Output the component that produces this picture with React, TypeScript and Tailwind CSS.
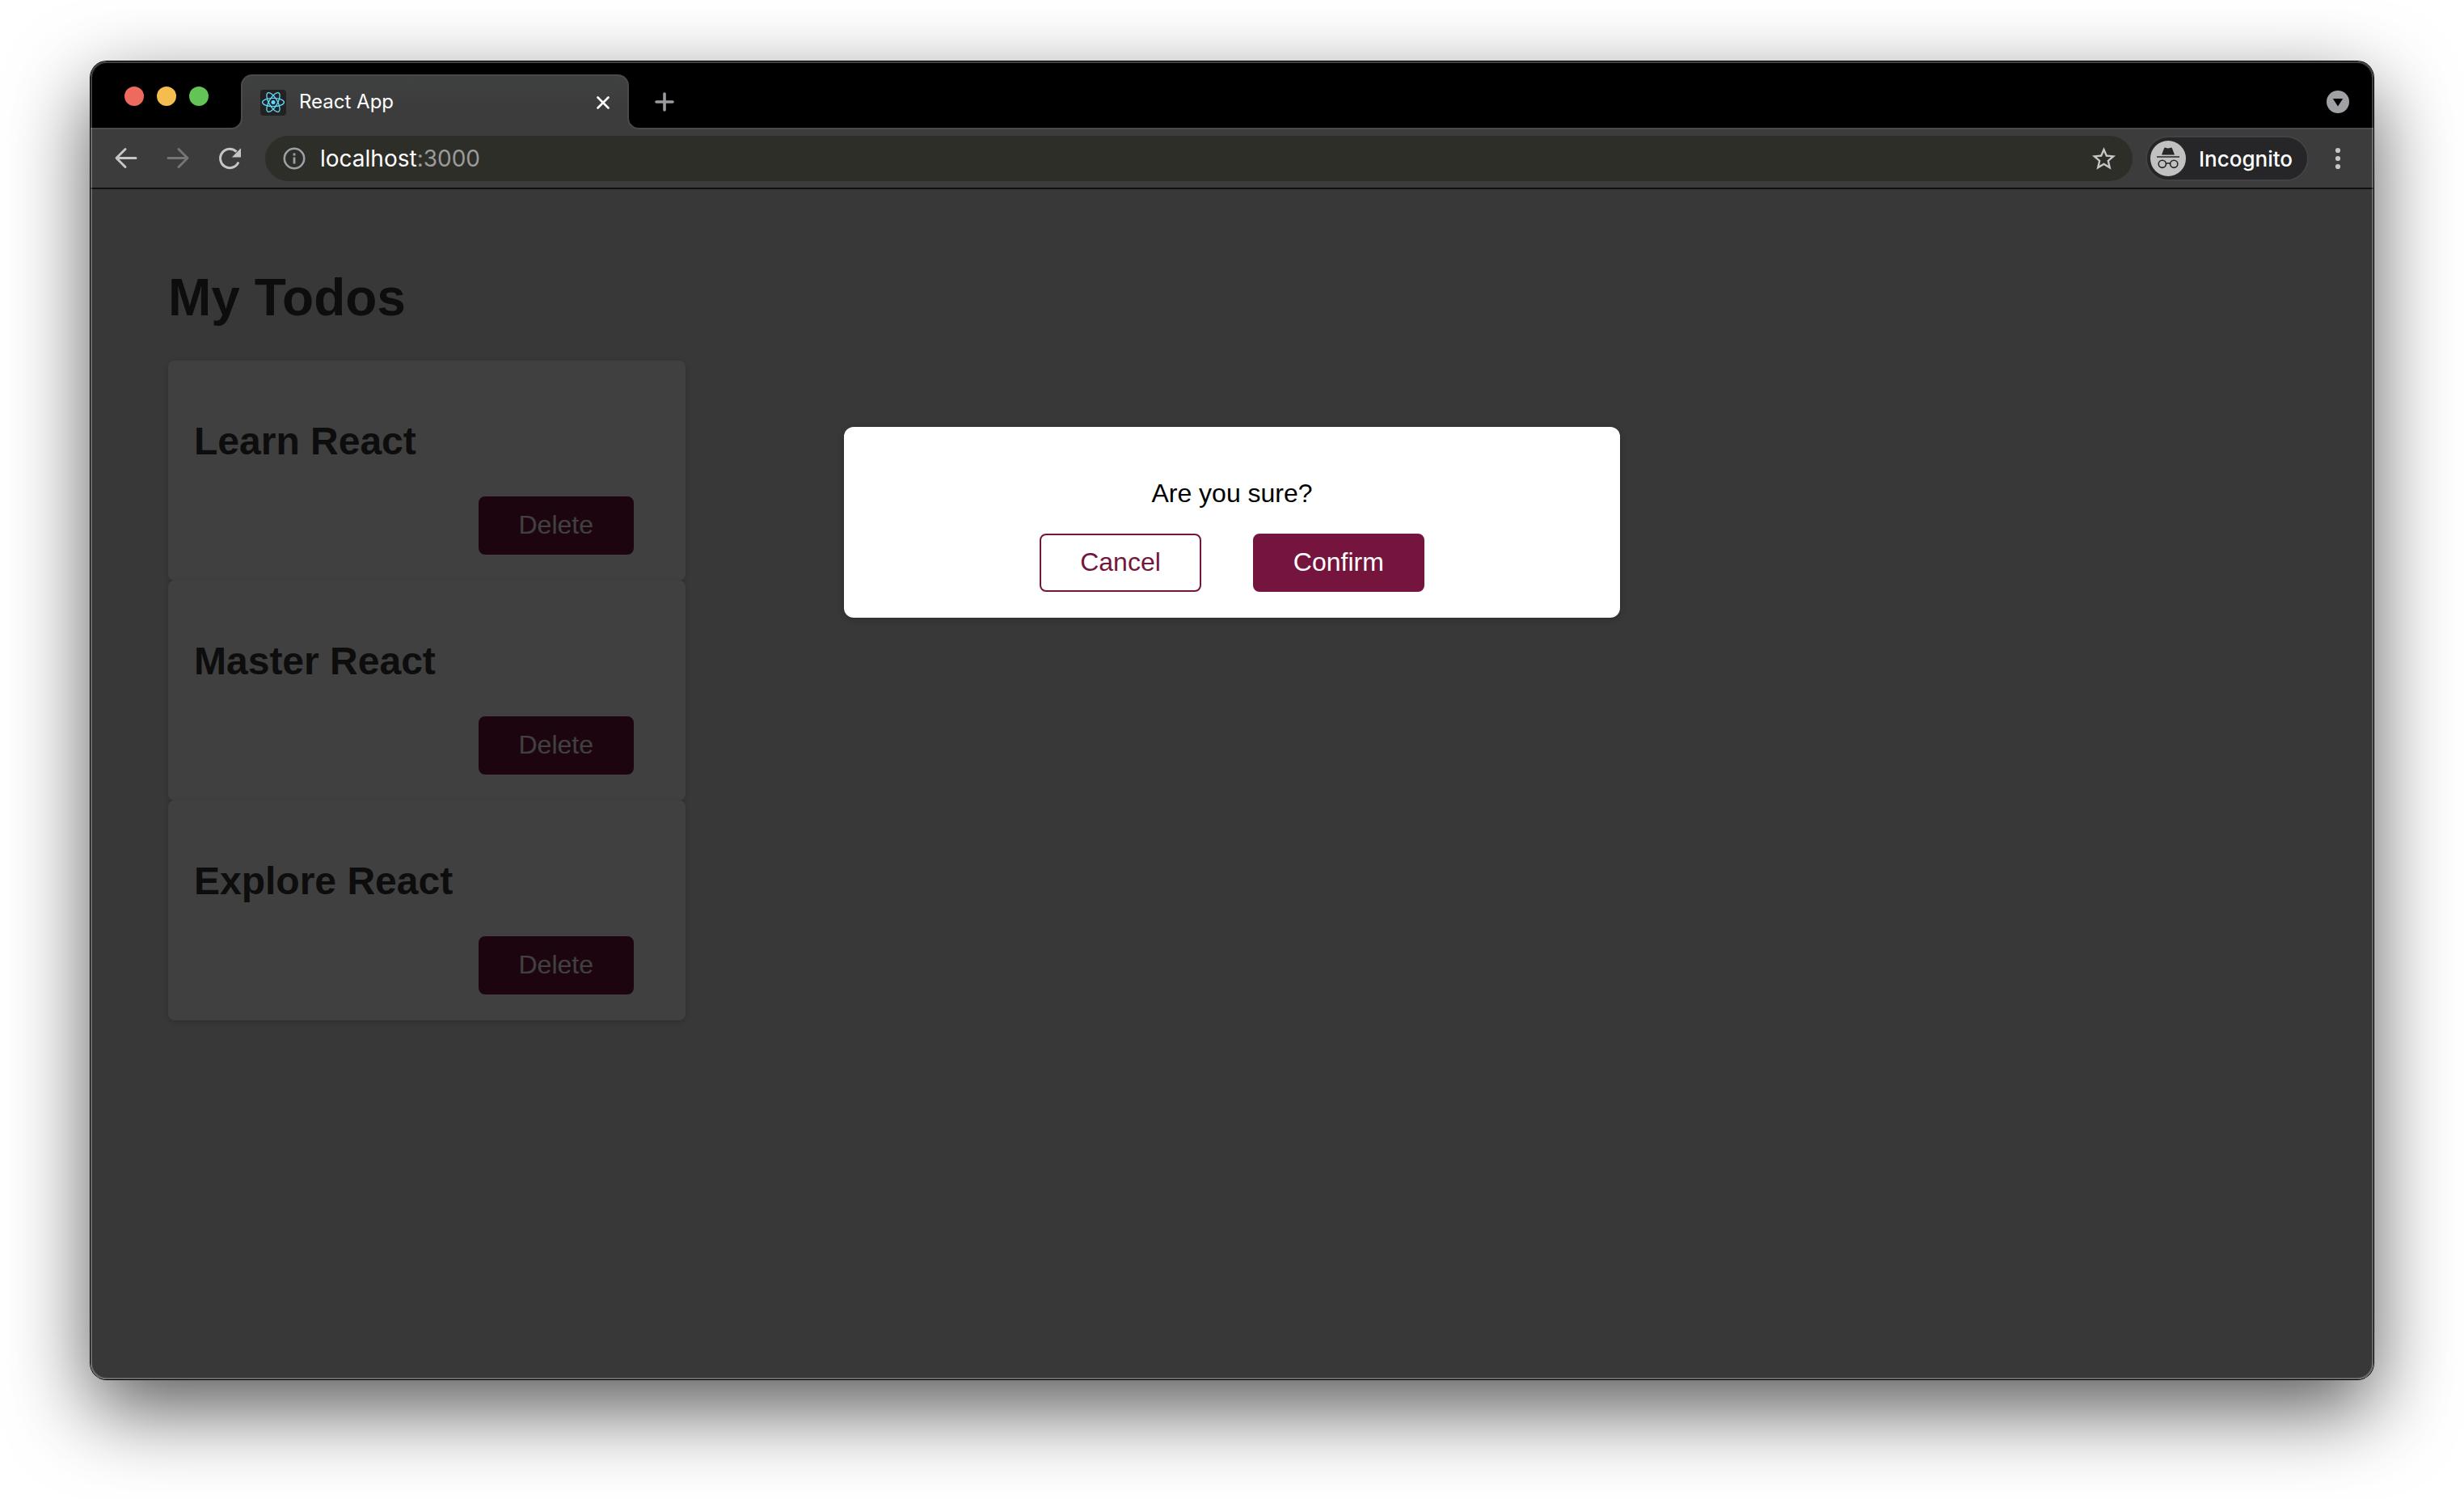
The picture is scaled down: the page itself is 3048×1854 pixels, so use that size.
import { useState } from "react";

const todos = ["Learn React", "Master React", "Explore React"];

function ReactLogo() {
  return (
    <svg viewBox="0 0 32 32" className="size-8 shrink-0" aria-hidden="true">
      <rect width="32" height="32" rx="4" fill="#222222" />
      <g fill="none" stroke="#61dafb" strokeWidth="1.3">
        <ellipse cx="16" cy="15.5" rx="13.4" ry="5.2" />
        <ellipse cx="16" cy="15.5" rx="13.4" ry="5.2" transform="rotate(60 16 15.5)" />
        <ellipse cx="16" cy="15.5" rx="13.4" ry="5.2" transform="rotate(120 16 15.5)" />
      </g>
      <circle cx="16" cy="15.5" r="2.5" fill="#61dafb" />
    </svg>
  );
}

function Tab() {
  return (
    <div className="relative mt-4 w-[480px]">
      <div className="flex h-[68px] items-center rounded-t-[14px] border-x-2 border-t-2 border-[#4b4949] bg-linear-to-b from-[#3f4140] to-[#3c3c3c] to-60% pr-[22px] pl-[22px]">
        <ReactLogo />
        <span className="ml-4 flex-1 pb-0.5 text-2xl text-white">React App</span>
        <button type="button" aria-label="Close tab" className="flex size-4 items-center justify-center">
          <svg viewBox="0 0 16 16" className="size-4" stroke="#ffffff" strokeWidth="2.6" strokeLinecap="round">
            <path d="M1.5 1.5 14.5 14.5M14.5 1.5 1.5 14.5" />
          </svg>
        </button>
      </div>
      <div className="absolute bottom-0 -left-3.5 size-4 bg-[#3c3c3c]">
        <div className="size-4 rounded-br-[14px] border-r-2 border-b-2 border-[#4b4949] bg-black" />
      </div>
      <div className="absolute -right-3.5 bottom-0 size-4 bg-[#3c3c3c]">
        <div className="size-4 rounded-bl-[14px] border-b-2 border-l-2 border-[#4b4949] bg-black" />
      </div>
    </div>
  );
}

function TabStrip() {
  return (
    <div className="flex bg-black shadow-[inset_0_-2px_0_#4b4949]">
      <div className="flex w-[186px] gap-4 pt-[31px] pl-[42px]">
        <button type="button" aria-label="Close window" className="size-6 rounded-full bg-[#ee6a5f]" />
        <button type="button" aria-label="Minimize window" className="size-6 rounded-full bg-[#f5bd4f]" />
        <button type="button" aria-label="Zoom window" className="size-6 rounded-full bg-[#61c454]" />
      </div>
      <Tab />
      <div className="flex flex-1 items-center justify-between pt-4 pr-[30px] pl-8">
        <button type="button" aria-label="New tab">
          <svg viewBox="0 0 24 24" className="size-6" stroke="#9a9b9e" strokeWidth="3.6" strokeLinecap="round">
            <path d="M12 2v20M2 12h20" />
          </svg>
        </button>
        <button type="button" aria-label="Search tabs">
          <svg viewBox="0 0 28 28" className="size-7">
            <circle cx="14" cy="14" r="14" fill="#a0a1a4" />
            <path d="M7.8 10h12.4L14 19.6z" fill="#000000" />
          </svg>
        </button>
      </div>
    </div>
  );
}

function Toolbar() {
  return (
    <div className="flex items-center border-b-2 border-[#111111] bg-[#3c3c3c] px-7 py-2">
      <div className="flex gap-8">
        <button type="button" aria-label="Back">
          <svg viewBox="0 0 32 32" className="size-8" fill="none" stroke="#c6c6c6" strokeWidth="3" strokeLinecap="round">
            <path d="M28 15.5H5M15 4.5 4 15.5 15 26.5" strokeLinejoin="round" />
          </svg>
        </button>
        <button type="button" aria-label="Forward">
          <svg viewBox="0 0 32 32" className="size-8" fill="none" stroke="#757575" strokeWidth="3" strokeLinecap="round">
            <path d="M4 15.5H27M17 4.5 28 15.5 17 26.5" strokeLinejoin="round" />
          </svg>
        </button>
        <button type="button" aria-label="Reload">
          <svg viewBox="0 0 32 32" className="size-8">
            <path d="M24.5 7.6A11.7 11.7 0 1 0 27 20.5" fill="none" stroke="#c6c6c6" strokeWidth="3" />
            <path d="M30 3.2v11.2H18.8z" fill="#c6c6c6" />
          </svg>
        </button>
      </div>
      <div className="ml-7 flex h-14 flex-1 items-center rounded-full bg-[#2e2e29] pr-[18px] pl-[22px]">
        <svg viewBox="0 0 28 28" className="size-7" aria-hidden="true">
          <circle cx="14" cy="14" r="12.2" fill="none" stroke="#9aa0a6" strokeWidth="2.6" />
          <path d="M14 12.6v8M14 7.4v3" stroke="#9aa0a6" strokeWidth="2.8" />
        </svg>
        <div className="ml-[18px] flex-1 text-[28px] text-[#9b9b9b]">
          <span className="text-white">localhost</span>:3000
        </div>
        <button type="button" aria-label="Bookmark this tab">
          <svg viewBox="0 0 24 24" className="size-[35px]" fill="#c6c6c6">
            <path d="m22 9.24-7.19-.62L12 2 9.190 8.63 2 9.24l5.46 4.73L5.82 21 12 17.27 18.18 21l-1.63-7.03zM12 15.4l-3.76 2.27 1-4.28-3.32-2.88 4.38-.38L12 6.1l1.710 4.040 4.38.38-3.32 2.88 1 4.28z" />
          </svg>
        </button>
      </div>
      <button
        type="button"
        className="ml-4 flex h-14 items-center rounded-full border-2 border-[#424246] bg-[#262628] pr-[18px] pl-1 text-[26px] font-medium text-white"
      >
        <svg viewBox="0 0 44 44" className="mr-4 size-11" aria-hidden="true">
          <circle cx="22" cy="22" r="22" fill="#c1c1c1" />
          <path d="M14 17.5 17 9.6q.5-1.3 1.9-.9l3.1.8 3.1-.8q1.4-.4 1.9.9l3 7.9z" fill="#262628" />
          <g fill="none" stroke="#262628" strokeWidth="1.6">
            <path d="M8 20h28M19.5 28.5q2.5-1.5 5 0" />
            <circle cx="14.8" cy="28.8" r="4.6" />
            <circle cx="29.2" cy="28.8" r="4.6" />
          </g>
        </svg>
        Incognito
      </button>
      <button type="button" aria-label="Menu" className="ml-5">
        <svg viewBox="0 0 32 32" className="size-8" fill="#c6c6c6">
          <circle cx="16" cy="6" r="3.1" />
          <circle cx="16" cy="16" r="3.1" />
          <circle cx="16" cy="26" r="3.1" />
        </svg>
      </button>
    </div>
  );
}

const buttonBase = "h-[72px] rounded-lg border-2 border-[#75143c] px-12 pb-0.5 text-[32px] leading-9";

function TodoCard({ title, onDelete }: { title: string; onDelete: () => void }) {
  return (
    <li className="rounded-lg bg-white p-8 shadow-[0_2px_8px_rgba(0,0,0,0.2)]">
      <h2 className="mt-10 text-5xl leading-14 font-bold">{title}</h2>
      <div className="mt-10 mr-8 flex justify-end">
        <button type="button" onClick={onDelete} className={buttonBase + " bg-[#75143c] text-white"}>
          Delete
        </button>
      </div>
    </li>
  );
}

function ConfirmDialog({ onClose }: { onClose: () => void }) {
  return (
    <div className="absolute inset-0 flex items-start justify-center bg-black/75 pt-[294px]">
      <div
        role="dialog"
        aria-label="Are you sure?"
        className="w-[960px] max-w-full rounded-xl bg-white p-8 text-center text-black shadow-[0_2px_8px_rgba(0,0,0,0.2)]"
      >
        <p className="mt-8 text-[32px] leading-9">Are you sure?</p>
        <div className="mt-8 flex justify-center gap-16">
          <button type="button" onClick={onClose} className={buttonBase + " bg-transparent text-[#75143c]"}>
            Cancel
          </button>
          <button type="button" onClick={onClose} className={buttonBase + " bg-[#75143c] text-white"}>
            Confirm
          </button>
        </div>
      </div>
    </div>
  );
}

export default function App() {
  const [open, setOpen] = useState(true);
  return (
    <div className="flex min-h-screen flex-col bg-white px-28 pt-[76px] pb-[148px]">
      <div className="relative flex flex-1 flex-col overflow-hidden rounded-[20px] shadow-[0_0_0_1px_#000000,0_36px_100px_rgba(0,0,0,0.66)]">
        <header className="font-['Inter',sans-serif]">
          <TabStrip />
          <Toolbar />
        </header>
        <main className="relative flex-1 bg-[#dfdfdf] px-24 pt-[94px] pb-24 font-['Liberation_Sans',Arial,sans-serif] text-[#353535]">
          <h1 className="text-[64px] leading-[80px] font-bold">My Todos</h1>
          <ul className="mt-[38px] w-[640px]">
            {todos.map((title) => (
              <TodoCard key={title} title={title} onDelete={() => setOpen(true)} />
            ))}
          </ul>
          {open && <ConfirmDialog onClose={() => setOpen(false)} />}
        </main>
        <div className="pointer-events-none absolute inset-0 rounded-[20px] border-2 border-white/25" />
      </div>
    </div>
  );
}
